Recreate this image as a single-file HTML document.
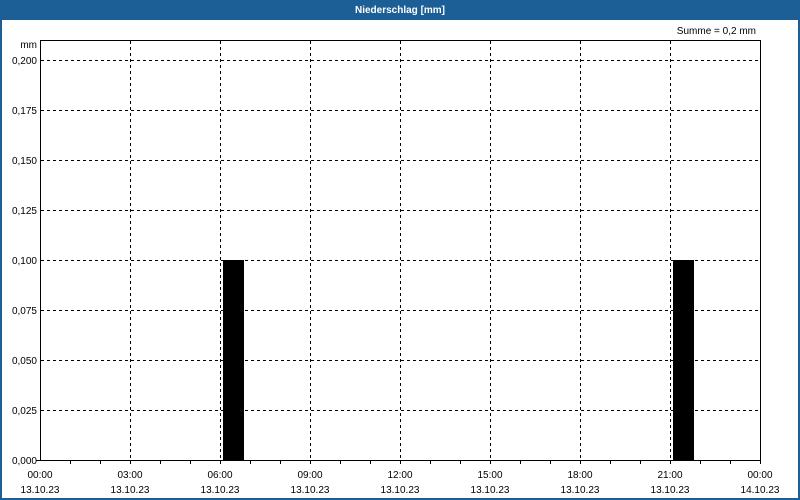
<!DOCTYPE html>
<html><head><meta charset="utf-8"><style>
html,body{margin:0;padding:0;background:#fff;}
svg{display:block;}
text{font-family:"Liberation Sans",sans-serif;font-size:10px;fill:#000;}
</style></head><body>
<svg width="800" height="500" xmlns="http://www.w3.org/2000/svg">
<rect x="0" y="0" width="800" height="500" fill="#1c5f96"/>
<rect x="2" y="20" width="796" height="478" fill="#fff"/>
<text x="400" y="13" text-anchor="middle" style="font-weight:bold;fill:#fff;font-size:10px">Niederschlag [mm]</text>
<text x="756" y="34" text-anchor="end">Summe = 0,2 mm</text>
<text x="37" y="48" text-anchor="end">mm</text>
<g stroke="#000" stroke-width="1" stroke-dasharray="3,3" fill="none">
<path d="M41 60.5H760M41 110.5H760M41 160.5H760M41 210.5H760M41 260.5H760M41 310.5H760M41 360.5H760M41 410.5H760"/>
<path d="M130.5 41V460M220.5 41V460M310.5 41V460M400.5 41V460M490.5 41V460M580.5 41V460M670.5 41V460"/>
</g>
<rect x="223" y="260" width="21" height="200" fill="#000"/>
<rect x="673" y="260" width="21" height="200" fill="#000"/>
<path d="M40.5 40.5H760.5V460.5M40.5 40V461M36 460.5H760" stroke="#000" stroke-width="1" fill="none"/>
<g stroke="#000" stroke-width="1">
<path d="M70.5 460v4M100.5 460v4M130.5 460v4M160.5 460v4M190.5 460v4M220.5 460v4M250.5 460v4M280.5 460v4M310.5 460v4M340.5 460v4M370.5 460v4M400.5 460v4M430.5 460v4M460.5 460v4M490.5 460v4M520.5 460v4M550.5 460v4M580.5 460v4M610.5 460v4M640.5 460v4M670.5 460v4M700.5 460v4M730.5 460v4M760.5 460v4"/>
</g>
<g text-anchor="end">
<text x="37" y="64">0,200</text><text x="37" y="114">0,175</text><text x="37" y="164">0,150</text>
<text x="37" y="214">0,125</text><text x="37" y="264">0,100</text><text x="37" y="314">0,075</text>
<text x="37" y="364">0,050</text><text x="37" y="414">0,025</text><text x="37" y="464">0,000</text>
</g>
<g text-anchor="middle">
<text x="40" y="478">00:00</text><text x="130" y="478">03:00</text><text x="220" y="478">06:00</text>
<text x="310" y="478">09:00</text><text x="400" y="478">12:00</text><text x="490" y="478">15:00</text>
<text x="580" y="478">18:00</text><text x="670" y="478">21:00</text><text x="760" y="478">00:00</text>
<text x="40" y="493">13.10.23</text><text x="130" y="493">13.10.23</text><text x="220" y="493">13.10.23</text>
<text x="310" y="493">13.10.23</text><text x="400" y="493">13.10.23</text><text x="490" y="493">13.10.23</text>
<text x="580" y="493">13.10.23</text><text x="670" y="493">13.10.23</text><text x="760" y="493">14.10.23</text>
</g>
</svg>
</body></html>
